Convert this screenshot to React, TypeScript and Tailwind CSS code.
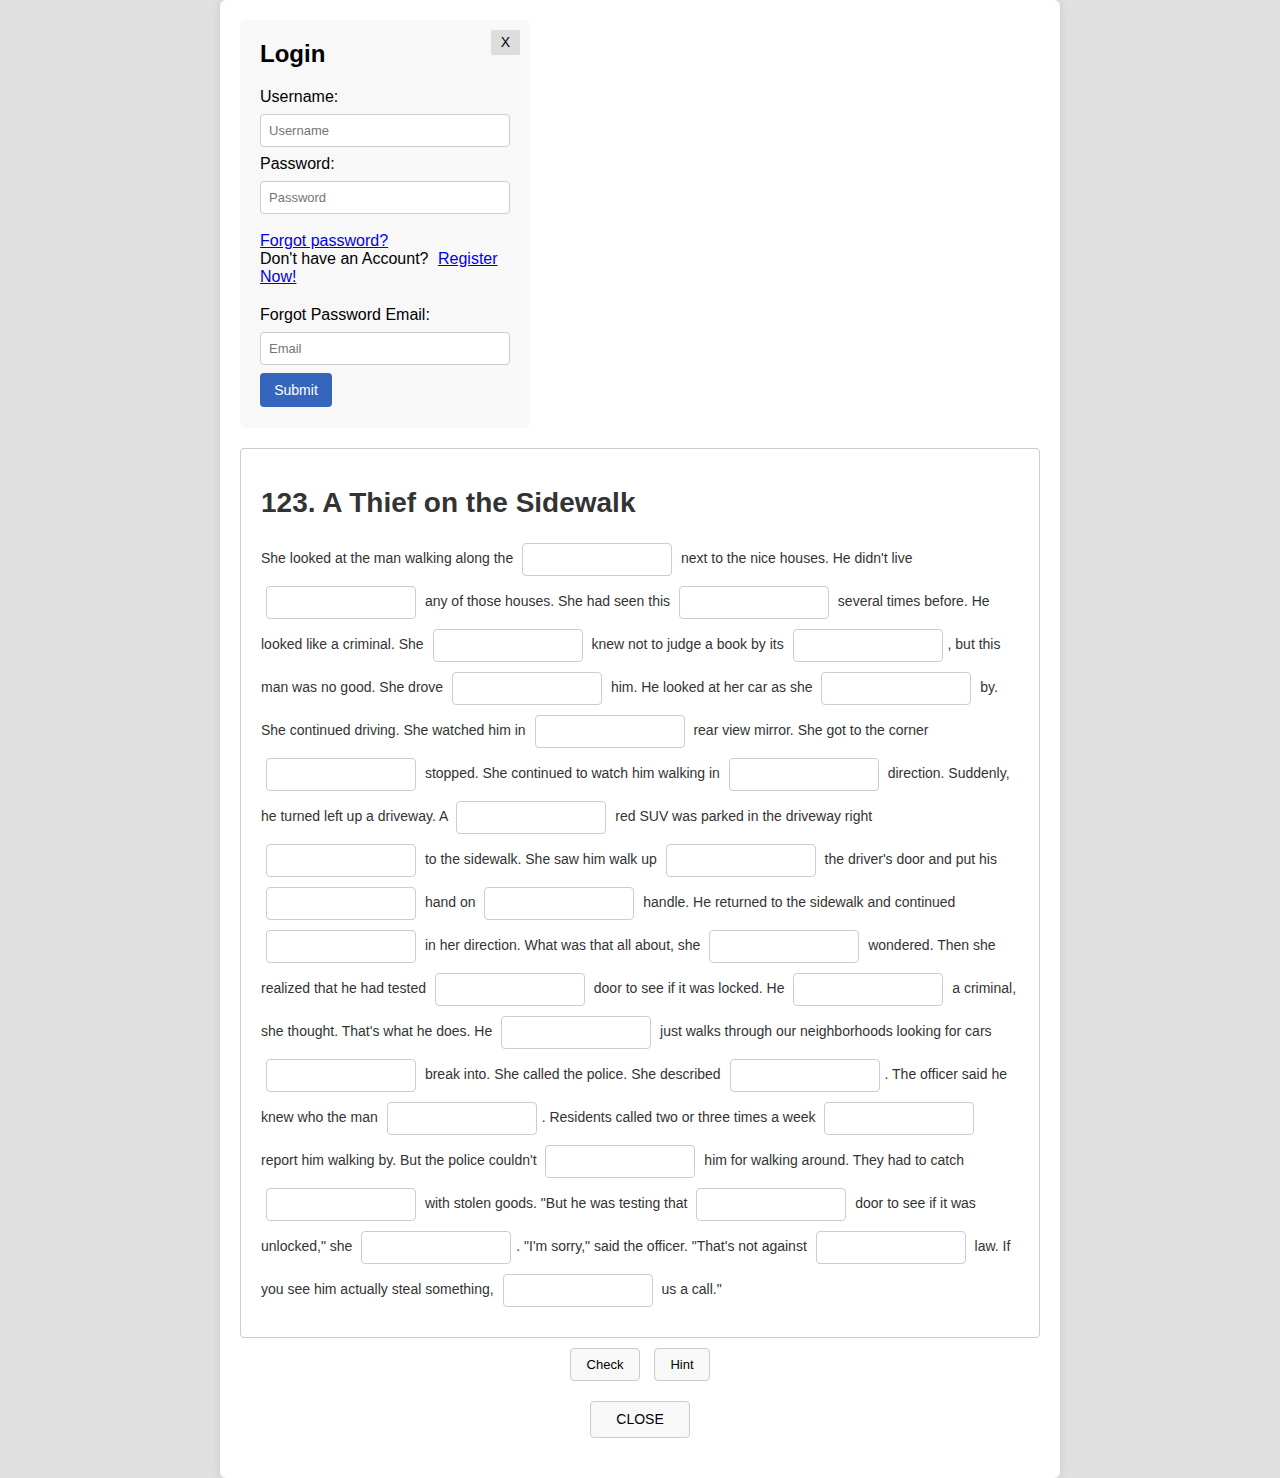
import React from "react";

const segments: string[] = [
  "She looked at the man walking along the",
  "next to the nice houses. He didn't live",
  "any of those houses. She had seen this",
  "several times before. He looked like a criminal. She",
  "knew not to judge a book by its",
  ", but this man was no good. She drove",
  "him. He looked at her car as she",
  "by. She continued driving. She watched him in",
  "rear view mirror. She got to the corner",
  "stopped. She continued to watch him walking in",
  "direction. Suddenly, he turned left up a driveway. A",
  "red SUV was parked in the driveway right",
  "to the sidewalk. She saw him walk up",
  "the driver's door and put his",
  "hand on",
  "handle. He returned to the sidewalk and continued",
  "in her direction. What was that all about, she",
  "wondered. Then she realized that he had tested",
  "door to see if it was locked. He",
  "a criminal, she thought. That's what he does. He",
  "just walks through our neighborhoods looking for cars",
  "break into. She called the police. She described",
  ". The officer said he knew who the man",
  ". Residents called two or three times a week",
  "report him walking by. But the police couldn't",
  "him for walking around. They had to catch",
  "with stolen goods. \"But he was testing that",
  "door to see if it was unlocked,\" she",
  ". \"I'm sorry,\" said the officer. \"That's not against",
  "law. If you see him actually steal something,",
  "us a call.\"",
];

function Blank() {
  return (
    <input
      type="text"
      className="inline-block w-[150px] h-[33px] mx-[5px] my-[5px] border border-[#ccc] rounded-[4px] bg-white align-middle px-2 text-[14px] outline-none"
    />
  );
}

export default function App() {
  const font = { fontFamily: '"Liberation Sans", Arial, Helvetica, sans-serif' };
  return (
    <div className="min-h-[1478px] bg-[#e0e0e0]" style={font}>
      <div className="w-[840px] mx-auto bg-white rounded-md shadow-[0_0_10px_rgba(0,0,0,0.1)] px-5 pt-5 pb-10">
        {/* Login panel */}
        <div className="relative w-[290px] bg-[#f8f8f8] rounded-[6px] px-5 pt-5 pb-[21px] text-black">
          <button className="absolute top-[10px] right-[10px] w-[29px] h-[25px] bg-[#dddddd] rounded-[2px] text-[14px] flex items-center justify-center">
            X
          </button>
          <h2 className="text-[24px] font-bold leading-[28px] mb-5">Login</h2>
          <label className="block text-[16px] leading-[18px] mb-[8px]">Username:</label>
          <input
            placeholder="Username"
            className="block w-[250px] h-[33px] border border-[#ccc] rounded-[4px] bg-white px-2 text-[13px] placeholder:text-[#757575] outline-none"
          />
          <label className="block text-[16px] leading-[18px] mt-[8px] mb-[8px]">Password:</label>
          <input
            placeholder="Password"
            type="password"
            className="block w-[250px] h-[33px] border border-[#ccc] rounded-[4px] bg-white px-2 text-[13px] placeholder:text-[#757575] outline-none"
          />
          <div className="mt-[18px] text-[16px] leading-[18px]">
            <a href="#" className="text-[#0000ee] underline">Forgot password?</a>
            <div>
              Don't have an Account?{"  "}
              <a href="#" className="text-[#0000ee] underline ml-[5px]">Register Now!</a>
            </div>
          </div>
          <label className="block text-[16px] leading-[18px] mt-[20px] mb-[8px]">Forgot Password Email:</label>
          <input
            placeholder="Email"
            className="block w-[250px] h-[33px] border border-[#ccc] rounded-[4px] bg-white px-2 text-[13px] placeholder:text-[#757575] outline-none"
          />
          <button className="mt-[8px] w-[72px] h-[34px] bg-[#3466bb] text-white text-[14px] rounded-[4px]">
            Submit
          </button>
        </div>

        {/* Story */}
        <div className="mt-5 border border-[#ccc] rounded-[4px] px-5 pt-5 pb-[25px] text-[#333]">
          <h2 className="text-[28px] font-bold leading-[32px] mt-[18px] mb-[19px] text-[#333]">
            123. A Thief on the Sidewalk
          </h2>
          <p className="text-[14px] leading-[20px]">
            {segments.map((s, i) => (
              <React.Fragment key={i}>
                {s}
                {i < segments.length - 1 && (
                  <>
                    {" "}
                    <Blank />
                    {segments[i + 1].startsWith(".") || segments[i + 1].startsWith(",") ? "" : " "}
                  </>
                )}
              </React.Fragment>
            ))}
          </p>
        </div>

        <div className="flex justify-center gap-[14px] mt-[10px]">
          <button className="w-[70px] h-[33px] border border-[#ccc] bg-[#f8f8f8] rounded-[4px] text-[13px] text-black">
            Check
          </button>
          <button className="w-[56px] h-[33px] border border-[#ccc] bg-[#f8f8f8] rounded-[4px] text-[13px] text-black">
            Hint
          </button>
        </div>
        <div className="flex justify-center mt-[20px]">
          <button className="w-[100px] h-[37px] border border-[#ccc] bg-[#f8f8f8] rounded-[4px] text-[14px] text-black">
            CLOSE
          </button>
        </div>
      </div>
    </div>
  );
}
